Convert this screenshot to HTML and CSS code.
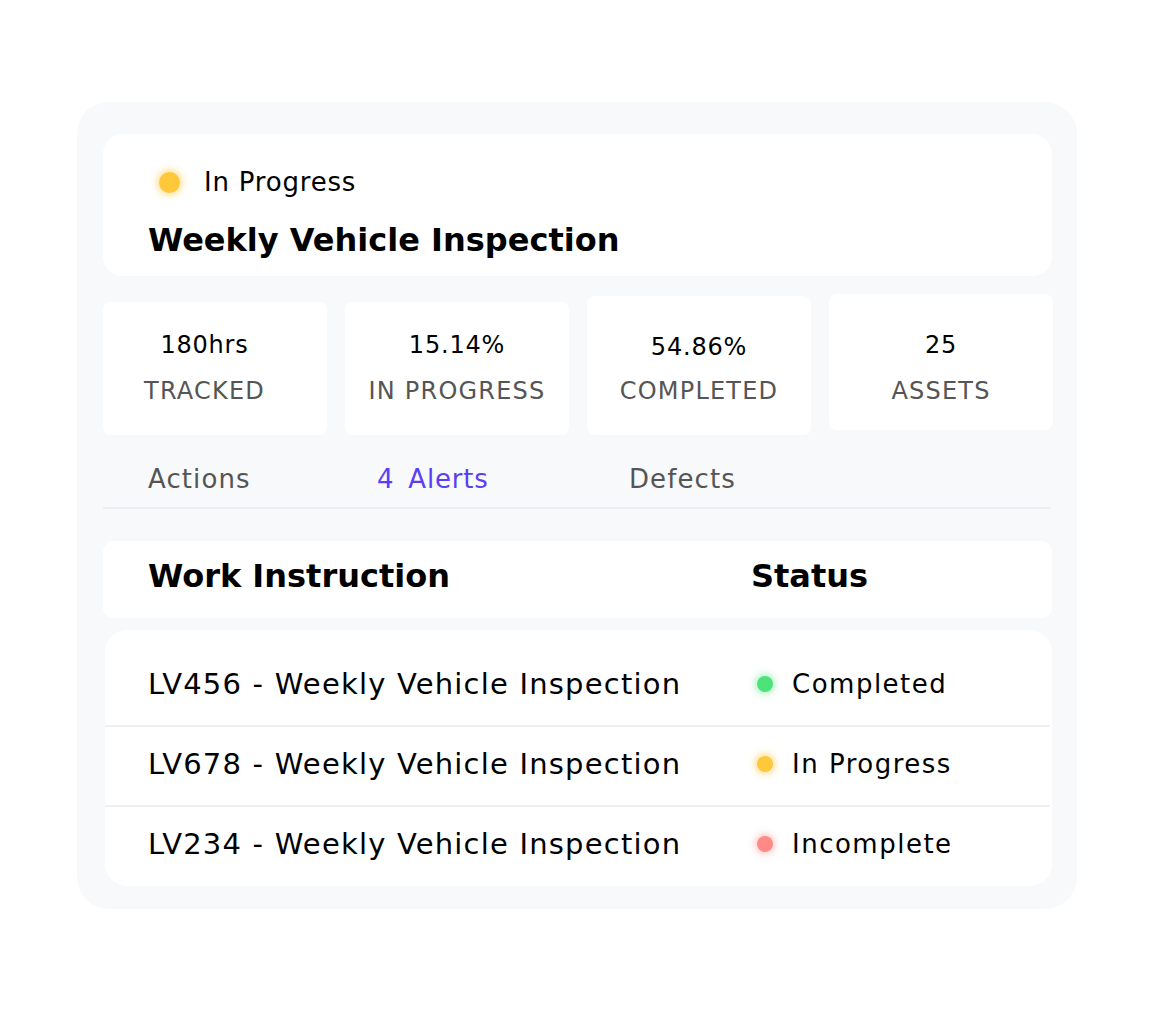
FILE: index.html
```html
<!DOCTYPE html>
<html lang="en">
<head>
<meta charset="utf-8">
<title>Weekly Vehicle Inspection</title>
<link rel="stylesheet" href="styles.css">
</head>
<body>
<div class="panel">
  <section class="header">
    <div class="state"><span class="dot dot-lg yellow"></span><span>In Progress</span></div>
    <h1 class="title">Weekly Vehicle Inspection</h1>
  </section>

  <section class="stats">
    <div class="stat s1"><div class="value">180hrs</div><div class="label">TRACKED</div></div>
    <div class="stat s2"><div class="value">15.14%</div><div class="label">IN PROGRESS</div></div>
    <div class="stat s3"><div class="value v3">54.86%</div><div class="label">COMPLETED</div></div>
    <div class="stat s4"><div class="value">25</div><div class="label">ASSETS</div></div>
  </section>

  <nav class="tabs">
    <span class="tab">Actions</span>
    <span class="tab active"><span class="count">4</span>Alerts</span>
    <span class="tab">Defects</span>
  </nav>

  <div class="thead">
    <span>Work Instruction</span>
    <span>Status</span>
  </div>

  <div class="tbody">
    <div class="row">
      <span class="name">LV456 - Weekly Vehicle Inspection</span>
      <span class="status"><span class="dot green"></span>Completed</span>
    </div>
    <div class="row">
      <span class="name">LV678 - Weekly Vehicle Inspection</span>
      <span class="status"><span class="dot yellow"></span>In Progress</span>
    </div>
    <div class="row">
      <span class="name">LV234 - Weekly Vehicle Inspection</span>
      <span class="status"><span class="dot red"></span>Incomplete</span>
    </div>
  </div>
</div>
</body>
</html>
```
FILE: styles.css
```css
* { box-sizing: border-box; }
html, body { margin: 0; padding: 0; background: #ffffff; }
body {
  font-family: "DejaVu Sans", "Noto Sans", sans-serif;
  color: #000;
  width: 1154px;
  height: 1014px;
  overflow: hidden;
}
.panel {
  width: 1000px;
  height: 807px;
  margin: 102px 0 0 77px;
  background: #f8f9fb;
  border-radius: 32px;
  padding: 32px 25px 0 26px;
}
.header {
  height: 142px;
  background: #fff;
  border-radius: 20px;
  padding: 31px 0 0 45px;
}
.state {
  display: flex;
  align-items: center;
  gap: 24px;
  height: 34px;
  font-size: 26px;
  letter-spacing: 0.8px;
  padding-left: 11px;
}
.dot {
  display: inline-block;
  width: 16px;
  height: 16px;
  border-radius: 50%;
  flex: none;
}
.dot-lg { width: 21px; height: 21px; }
.yellow { background: #ffc83a; box-shadow: 0 0 6px 3px rgba(255, 200, 58, 0.45); }
.green { background: #4ee37a; box-shadow: 0 0 6px 3px rgba(78, 227, 122, 0.35); }
.red { background: #ff8a86; box-shadow: 0 0 6px 3px rgba(255, 138, 134, 0.35); }
.title {
  margin: 21px 0 0;
  font-size: 32px;
  line-height: 40px;
  font-weight: 700;
}
.stats {
  margin-top: 26px;
  display: grid;
  grid-template-columns: repeat(4, 224px);
  column-gap: 18px;
  height: 133px;
  align-items: start;
}
.stat {
  background: #fff;
  border-radius: 8px;
  height: 133px;
  text-align: center;
  padding-top: 27px;
}
.s1 { padding-right: 21px; }
.s3 { height: 139px; margin-top: -6px; padding-top: 35px; }
.s4 { height: 136px; margin-top: -8px; padding-top: 35px; }
.value { font-size: 24px; line-height: 32px; letter-spacing: 0.8px; }
.label { font-size: 24px; line-height: 32px; color: #555; margin-top: 14px; letter-spacing: 1.2px; }
.s3 .label { margin-top: 12px; }
.tabs {
  display: grid;
  grid-template-columns: 229px 252px auto;
  padding: 28px 0 12px 45px;
  border-bottom: 2px solid #eceef1;
  width: 947px;
  font-size: 26px;
  line-height: 32px;
  letter-spacing: 1.1px;
  color: #555;
}
.tab.active { color: #5a3ff5; letter-spacing: 0.8px; }
.count { margin-right: 14px; }
.thead {
  margin-top: 32px;
  height: 77px;
  background: #fff;
  border-radius: 10px;
  display: grid;
  grid-template-columns: 603px auto;
  align-items: center;
  padding: 0 0 8px 45px;
  font-size: 32px;
  font-weight: 700;
}
.tbody {
  margin: 12px 0 0 2px;
  height: 256px;
  background: #fff;
  border-radius: 22px;
  padding-top: 17px;
}
.row {
  display: grid;
  grid-template-columns: 609px auto;
  align-items: center;
  height: 80px;
  padding: 0 0 5px 43px;
  border-bottom: 2px solid #eef0f3;
  margin-right: 2px;
}
.row:last-child { border-bottom: none; height: 79px; }
.name { font-size: 29px; letter-spacing: 1.2px; }
.status {
  display: flex;
  align-items: center;
  gap: 19px;
  font-size: 26px;
  letter-spacing: 1.5px;
}
```
